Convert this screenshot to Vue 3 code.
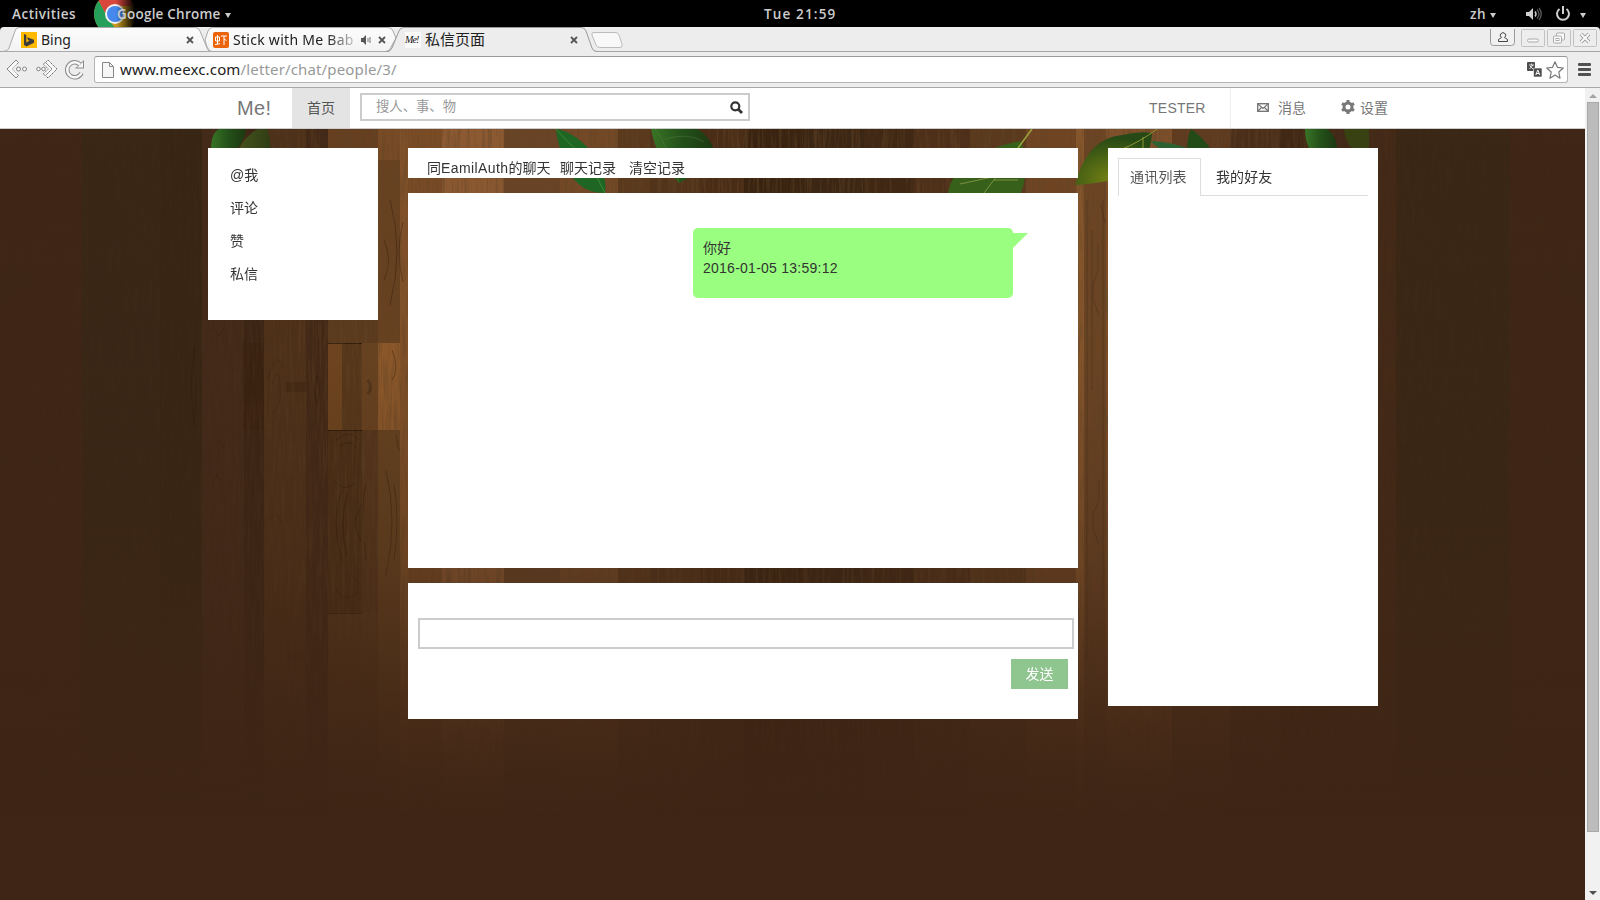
<script setup>
const sideLinks = ['@我', '评论', '赞', '私信']

// Floor planks: [left, width, colour]
const planks = [
  [0, 82, '#3f2616'], [82, 78, '#3a2716'], [160, 42, '#382614'], [202, 42, '#432a19'],
  [244, 20, '#3c2515'], [264, 42, '#4e311a'], [306, 22, '#432917'], [328, 52, '#5c3b1e'],
  [378, 22, '#6b4523'], [400, 8, '#82522a'], [408, 34, '#7a4c26'], [442, 62, '#8b5932'],
  [504, 56, '#6a4426'], [560, 58, '#734927'], [618, 32, '#5b391c'], [650, 50, '#52341b'],
  [700, 44, '#4a2d17'], [744, 60, '#3a2411'], [804, 60, '#3c2614'], [864, 50, '#402815'],
  [914, 56, '#4e301a'], [970, 56, '#5a391d'], [1026, 50, '#704524'], [1076, 8, '#85562c'],
  [1084, 22, '#6c4525'], [1106, 66, '#7e502b'], [1172, 58, '#5f3b20'], [1230, 50, '#4a2e1a'],
  [1280, 50, '#412815'], [1330, 66, '#432917'], [1396, 114, '#3a2715'], [1510, 80, '#3f2616']
]

// Short boards laid across the long ones: [x, y, w, h, colour, opacity]
const boards = [
  [328, 129, 50, 31, '#6b4321', 0.6], [378, 129, 22, 31, '#7a4c27', 0.8], [378, 160, 22, 183, '#654120', 0.6],
  [328, 343, 14, 87, '#75491f', 0.8], [342, 343, 19, 87, '#573719', 0.9], [362, 343, 16, 87, '#6a4521', 0.9],
  [378, 343, 22, 87, '#8f5b2c', 0.95], [328, 430, 34, 183, '#472d15', 0.8], [362, 430, 16, 183, '#55361b', 0.8],
  [378, 430, 22, 183, '#67421f', 0.8], [328, 613, 34, 87, '#5a3a1d', 0.8], [378, 613, 22, 87, '#674320', 0.8],
  [243, 343, 21, 87, '#38210f', 0.6], [286, 382, 20, 10, '#3b2310', 0.5], [286, 652, 20, 10, '#3b2310', 0.3],
  [328, 343, 34, 1, '#201006', 0.7], [328, 430, 34, 1, '#201006', 0.7], [328, 613, 34, 1, '#201006', 0.6]
]
</script>

<template>
  <div class="screen">
    <header class="topbar">
      <span class="activities">Activities</span>
      <svg class="chrome-logo" width="44" height="27" viewBox="0 0 44 27">
        <defs>
          <linearGradient id="lf" x1="0" x2="1"><stop offset=".5" stop-color="#000" stop-opacity="0" /><stop offset=".93" stop-color="#000" /></linearGradient>
          <clipPath id="lc"><circle cx="21" cy="14" r="21" /></clipPath>
        </defs>
        <g clip-path="url(#lc)">
          <path d="M0 0H44V27H0z" fill="#c99a1c" />
          <path d="M0 -8H44V6H21L14 18L4 0z" fill="#d8463c" />
          <path d="M3 -2L15 20L21 28H0V-2z" fill="#25a05a" />
        </g>
        <circle cx="21" cy="14" r="10" fill="#f1f1f1" /><circle cx="21" cy="14" r="8" fill="#4688ed" />
        <rect width="44" height="27" fill="url(#lf)" />
      </svg>
      <span class="appname">Google Chrome</span><i class="caret"></i>
      <span class="clock">Tue 21:59</span>
      <span class="lang">zh</span><i class="caret c2"></i>
      <svg class="vol" width="16" height="14" viewBox="0 0 16 14"><path d="M0 5h3l4-4v12L3 9H0z" fill="#d0d0d0" /><path d="M9 4.5q2 2.5 0 5" stroke="#ccc" stroke-width="1.5" fill="none" /><path d="M11 2.5q4 4.500 0 9M13 1q4.500 6 0 12" stroke="#555" stroke-width="1.400" fill="none" /></svg>
      <svg class="power" width="16" height="16" viewBox="0 0 16 16"><path d="M4.500 3A6 6 0 1 0 11.500 3" fill="none" stroke="#d0d0d0" stroke-width="2" /><path d="M8 0v8" stroke="#d0d0d0" stroke-width="2" /></svg>
      <i class="caret c3"></i>
    </header>

    <div class="tabstrip">
      <svg class="strip-art" width="1600" height="26" viewBox="0 0 1600 26">
        <defs><linearGradient id="tg" x2="0" y2="1"><stop stop-color="#fcfcfc" /><stop offset="1" stop-color="#f3f3f3" /></linearGradient></defs>
        <path d="M0 0H1600V26H0z" fill="#ededed" />
        <path d="M0 0H4Q0 0 0 4zM1600 0H1596Q1600 0 1600 4z" fill="#000" />
        <path d="M0 24.500H1600" stroke="#a5a5a5" />
        <g fill="url(#tg)" stroke="#a9a9a9">
          <path d="M3 24.500Q8 24.500 9 21L15 4Q16 .5 19 .5H195Q199 .5 200 4L207 21Q208 24.500 211 24.500z" />
          <path d="M207 20L205 13L208 4Q209 .5 213 .5H388Q392 .5 393 4L396 11L390 22Q389 24.500 386 24.500H212Q209 24.500 207 20z" />
        </g>
        <path d="M386 25.500Q391 24.500 392 21L399 4Q400 .5 404 .5H581Q585 .5 586 4L592 21Q593 24.500 597 24.500L597 26H386z" fill="#ededed" />
        <path d="M386 24.500Q391 24.500 392 21L399 4Q400 .5 404 .5H581Q585 .5 586 4L592 21Q593 24.500 597 24.500" fill="none" stroke="#999" />
        <path d="M594 5.500H615Q618 5.500 619 8L622 17Q623 20.500 620 20.500H600Q597 20.500 596 18L592 8Q591 5.500 594 5.500z" fill="#f8f8f8" stroke="#bcbcbc" />
      </svg>
      <div class="tab t1">
        <svg width="16" height="16" viewBox="0 0 16 16"><path d="M0 0h16v16H0z" fill="#ffb900" /><path d="M3 2l2.300.9V10.500l3.200-1.900-1.500-.7L6 5.300L13 7.700v3L5.500 14.500 3 13z" fill="#3c3c3c" /></svg>
        <span class="tabname">Bing</span>
        <svg class="x" width="8" height="8" viewBox="0 0 8 8"><path d="M1 1l6 6M7 1l-6 6" stroke="#555" stroke-width="1.800" /></svg>
      </div>
      <div class="tab t2">
        <svg width="16" height="16" viewBox="0 0 16 16"><rect width="16" height="16" rx="2" fill="#ec6408" /><path d="M2.500 5h4v4h-4zM4.500 3v9M2 12.500l5-.8M8 4h6M11 4v9M11 7l2.500 1.500" stroke="#fff" fill="none" /></svg>
        <span class="tabname fade">Stick with Me Bab</span>
        <svg class="snd" width="10" height="10" viewBox="0 0 10 10"><path d="M0 3h2l3-3v10L2 7H0z" fill="#555" /><path d="M7 3v4M9 2v6" stroke="#777" /></svg>
        <svg class="x" width="8" height="8" viewBox="0 0 8 8"><path d="M1 1l6 6M7 1l-6 6" stroke="#555" stroke-width="1.800" /></svg>
      </div>
      <div class="tab t3">
        <span class="fav">Me!</span>
        <span class="tabname">私信页面</span>
        <svg class="x" width="8" height="8" viewBox="0 0 8 8"><path d="M1 1l6 6M7 1l-6 6" stroke="#555" stroke-width="1.800" /></svg>
      </div>
      <svg class="wins" width="110" height="22" viewBox="0 0 110 22" fill="none">
        <path d="M2.500 2V15.500Q2.500 18.500 5.500 18.500H23.500Q26.500 18.500 26.500 15.500V2" stroke="#999" fill="#f1f1f1" />
        <path d="M10.500 14.500V12.500L13.500 10.500Q11.500 9 12.500 7Q15 4 17.500 7Q18.500 9 16.500 10.500L19.500 12.500V14.500z" stroke="#444" />
        <g stroke="#c2c2c2"><rect x="33.500" y="2.500" width="23" height="17" rx="1" /><rect x="59.500" y="2.500" width="23" height="17" rx="1" /><rect x="85.500" y="2.500" width="23" height="17" rx="1" /></g>
        <g stroke="#aaa" fill="#fafafa"><rect x="39.500" y="12" width="11" height="3" rx="1.500" /><rect x="68.500" y="6" width="8" height="7" rx="1" /><rect x="65.500" y="9" width="8" height="7" rx="1" /><rect x="68" y="11.500" width="3" height="2" /></g>
        <path d="M93 7l8 8M101 7l-8 8" stroke="#999" stroke-width="3.800" /><path d="M93 7l8 8M101 7l-8 8" stroke="#fafafa" stroke-width="1.800" />
      </svg>
    </div>

    <div class="toolbar">
      <svg class="navicons" width="94" height="34" viewBox="0 0 94 34" fill="none">
        <g stroke="#858585" fill="#f8f8f8">
          <path d="M7 16L16 7L18.500 9.500L12 16L18.500 22.500L16 25z" />
          <circle cx="18.500" cy="16" r="2" /><circle cx="24.500" cy="16" r="2" />
          <path d="M12 16L17 11M12 16l5 5" stroke="#c0c0c0" />
          <g stroke-dasharray="1.500 .8"><path d="M57 16L48 7L45.500 9.500L52 16L45.500 22.500L48 25z" stroke="#666" /><path d="M52 16L45.500 9.500L43 11L48.500 16L43 21L45.500 22.500z" stroke="#777" /></g>
          <circle cx="38.500" cy="16" r="1.800" /><circle cx="43.500" cy="16" r="1.800" />
        </g>
        <path d="M80 11.500A7.500 7.500 0 1 0 81.500 20" stroke="#8b8b8b" stroke-width="4.500" /><path d="M84 7v8.500h-9z" fill="#8b8b8b" />
        <path d="M80 11.500A7.500 7.500 0 1 0 81.500 20" stroke="#f7f7f7" stroke-width="2.500" /><path d="M83 9v5.500h-6z" fill="#f7f7f7" />
      </svg>
      <div class="omnibox">
        <svg class="page" width="12" height="16" viewBox="0 0 12 16"><path d="M.5.5H7.500L11.500 4.500V15.500H.5z" fill="#f6f6f6" stroke="#888" /><path d="M7.500.5v4h4" fill="none" stroke="#888" /></svg>
        <span class="url"><b>www.meexc.com</b>/letter/chat/people/3/</span>
        <svg class="translate" width="15" height="15" viewBox="0 0 15 15"><rect width="8" height="9" rx="1" fill="#4d4d4d" /><rect x="6.500" y="6" width="8.500" height="9" rx="1" fill="#4d4d4d" stroke="#fff" stroke-width=".6" /><path d="M2 3h5M4.500 1.500V3M2.500 7l3.500-4M3 4l3 3" stroke="#fff" stroke-width=".8" /><path d="M8.800 13l2-5 2 5M9.500 11.500h2.600" stroke="#fff" fill="none" /></svg>
        <svg class="star" width="18" height="18" viewBox="0 0 18 18"><path d="M9 .8L11.400 6.300L17.300 7L12.800 11L14 17.200L9 14L4 17.200L5.200 11L.7 7L6.600 6.300z" fill="#fff" stroke="#777" stroke-width="1.200" stroke-linejoin="round" /></svg>
      </div>
      <div class="menu"><i></i><i></i><i></i></div>
    </div>

    <div class="viewport">
      <div class="page-area">
        <svg class="wood" width="1585" height="771" viewBox="0 129 1585 771">
          <defs>
            <linearGradient id="fade" x2="0" y2="1"><stop stop-color="#402714" stop-opacity="0" /><stop offset=".3" stop-color="#3e2515" stop-opacity=".03" /><stop offset=".55" stop-color="#3e2515" stop-opacity=".32" /><stop offset=".7" stop-color="#3e2515" stop-opacity=".68" /><stop offset=".77" stop-color="#3e2515" stop-opacity=".84" /><stop offset=".83" stop-color="#3e2515" stop-opacity=".94" /><stop offset=".9" stop-color="#3e2515" /></linearGradient>
            <linearGradient id="gm"><stop stop-color="#000" /><stop offset=".12" stop-color="#202020" /><stop offset=".23" stop-color="#fff" /><stop offset=".78" stop-color="#fff" /><stop offset=".88" stop-color="#202020" /><stop offset="1" stop-color="#000" /></linearGradient>
            <mask id="grainmask"><rect y="129" width="1585" height="771" fill="url(#gm)" /></mask>
            <filter id="grain" x="0" y="0" width="100%" height="100%"><feTurbulence type="fractalNoise" baseFrequency=".4 .025" numOctaves="3" seed="8" /><feColorMatrix values="0 0 0 0 .12  0 0 0 0 .06  0 0 0 0 .02  2.600 0 0 0 -1.150" /></filter>
            <radialGradient id="lime" cx=".5" cy=".9" r=".8"><stop stop-color="#788313" /><stop offset="1" stop-color="#264915" /></radialGradient>
            <linearGradient id="leaf"><stop stop-color="#397426" /><stop offset=".5" stop-color="#235019" /><stop offset="1" stop-color="#1d3711" /></linearGradient>
            <linearGradient id="dusk"><stop stop-color="#47601f" stop-opacity=".7" /><stop offset="1" stop-color="#2e3d14" /></linearGradient>
          </defs>
          <rect y="129" width="1585" height="771" fill="#3e2515" />
          <rect v-for="p in planks" :key="p[0]" :x="p[0]" y="129" :width="p[1]" height="771" :fill="p[2]" />
          <rect v-for="(b, i) in boards" :key="'b' + i" :x="b[0]" :y="b[1]" :width="b[2]" :height="b[3]" :fill="b[4]" :opacity="b[5]" />
          <g fill="none" stroke="#241306" stroke-width="1" opacity=".38">
            <path d="M336 440q15-12 22 0M340 446q10-8 16 2M336 590q10 14 22 2M333 480q10 14 24 2M342 490q-12 30 0 72M347 494q-8 30 0 62M361 505l-7 18 7 18M351 575l8 8M366 485q-6 20 0 75" />
            <path d="M368 380q5 7 0 14" stroke-width="3" /><path d="M317 375q-4 16 0 30q4-14 0-30M394 485q6 35 0 75M386 470q12 50 0 105M392 350q8 20 0 30M396 435l3 16M403 222q-8 30 0 60M390 200q14 50 0 105M384 240q9 20 0 40" />
            <path d="M194 348q-5 35 0 78q4-40 0-78M268 380q8-35 16-10M272 385q6-22 8 0t-8 28M214 450l5-10l5 10M214 328l5 8l5-8M212 486l5-12 5 12M268 520q8-12 14 3" opacity=".5" />
            <path d="M1098 245v25l-5 14v16l6 14M1101 205l4 18M1099 480v20l-6 14v14l6 18M1092 230v160M1087 200v460M1103 200v400" opacity=".65" />
          </g>
          <g mask="url(#grainmask)"><rect y="129" width="1585" height="771" filter="url(#grain)" opacity=".55" /></g>
          <rect y="129" width="1585" height="771" fill="url(#fade)" />
          <path d="M211 150Q211 133 219 129H246Q245 141 236 150z" fill="url(#leaf)" /><path d="M238 150Q247 134 258 129H267Q271 138 270 150z" fill="url(#dusk)" />
          <path d="M556 129Q576 132 595 156Q608 178 605 193Q573 193 564 158Q557 143 556 129z" fill="#1f6524" /><path d="M556 129Q573 148 588 160L605 193" fill="none" stroke="#3b8a34" />
          <path d="M651 129H698Q710 137 714 150Q700 173 679 183Q657 160 651 129z" fill="url(#leaf)" /><path d="M655 129Q668 145 679 183M665 139Q688 132 704 142" fill="none" stroke="#5c8140" opacity=".4" />
          <path d="M948 193Q955 154 1021 141Q1030 168 1021 193z" fill="#37611b" /><path d="M1032 129L1018 148" fill="none" stroke="#9aa63c" stroke-width="1.500" /><path d="M1018 148L984 193M997 176L960 184M1005 166L974 164M994 180L1018 180" fill="none" stroke="#7c9040" />
          <path d="M1075 185Q1087 138 1122 135Q1139 131 1152 133Q1151 160 1130 174Q1109 183 1075 185z" fill="url(#lime)" /><path d="M1120 150Q1140 142 1157 129M1143 137v11" stroke="#8b9634" fill="none" />
          <path d="M1151 141Q1173 142 1193 150H1164Q1155 147 1151 141z" fill="#2c6132" /><path d="M1191 129Q1205 139 1211 150H1187Q1187 138 1191 129z" fill="#234b18" />
          <path d="M1305 129H1328Q1338 139 1337 150H1310Q1305 141 1305 129z" fill="url(#leaf)" /><path d="M1344 129H1369V150H1353Q1344 139 1344 129z" fill="#354711" opacity=".8" />
        </svg>

        <nav class="sitenav">
          <a class="brand">Me!</a>
          <a class="home">首页</a>
          <div class="search">
            <span>搜人、事、物</span>
            <svg width="13" height="13" viewBox="0 0 13 13"><circle cx="5.300" cy="5.300" r="4" fill="none" stroke="#333" stroke-width="2.200" /><path d="M8 8l4 4" stroke="#333" stroke-width="2.800" /></svg>
          </div>
          <a class="user">TESTER</a>
          <div class="msgs">
            <svg width="12" height="9" viewBox="0 0 12 9"><rect x=".7" y=".7" width="10.600" height="7.600" fill="none" stroke="#777" stroke-width="1.400" /><path d="M1 1l5 4.500L11 1M1 8l3.500-3.500M11 8L7.500 4.500" fill="none" stroke="#777" stroke-width="1.200" /></svg>
            <a>消息</a>
          </div>
          <div class="settings">
            <svg width="14" height="14" viewBox="-7 -7 14 14"><circle r="4" fill="none" stroke="#777" stroke-width="3" /><g stroke="#777" stroke-width="3"><path d="M0-4.500V-7M0 4.500V7M3.900-2.250L6-3.500M3.900 2.250L6 3.500M-3.900-2.250L-6-3.500M-3.900 2.250L-6 3.500" /></g></svg>
            <a>设置</a>
          </div>
        </nav>

        <main class="columns">
          <aside class="side"><a v-for="l in sideLinks" :key="l">{{ l }}</a></aside>
          <section class="center">
            <div class="chat-head"><span class="peer">同<em>EamilAuth</em>的聊天</span><a class="history">聊天记录</a><a>清空记录</a></div>
            <div class="chat">
              <div class="bubble"><p>你好</p><p class="time">2016-01-05 13:59:12</p></div>
            </div>
            <div class="compose"><div class="field"></div><button>发送</button></div>
          </section>
          <aside class="contacts">
            <div class="ctabs"><a class="on">通讯列表</a><a class="off">我的好友</a></div>
          </aside>
        </main>
      </div>
      <div class="scroll">
        <svg width="15" height="14" viewBox="0 0 15 14"><path d="M4 10l4-4 4 4z" fill="#a3a3a3" /></svg>
        <div class="thumb"></div>
        <svg width="15" height="14" viewBox="0 0 15 14"><path d="M4 5l4 4 4-4z" fill="#505050" /></svg>
      </div>
    </div>
  </div>
</template>

<style>
html, body { margin: 0; overflow: hidden; }
</style>

<style scoped>
* { box-sizing: border-box; }
p { margin: 0; }
svg { display: block; flex: none; }
.screen { width: 1600px; height: 900px; overflow: hidden; display: flex; flex-direction: column; background: #000; font: 14px/20px "Liberation Sans", "Noto Sans CJK SC", sans-serif; color: #333; }
.topbar { height: 27px; flex: none; display: flex; align-items: center; color: #ccc; font: 600 13.500px/28px "Open Sans", "Noto Sans", sans-serif; letter-spacing: .5px; padding-left: 12px; white-space: nowrap; }
.activities { width: 82px; }
.chrome-logo { margin-right: -21px; }
.appname { position: relative; width: 105px; letter-spacing: .22px; }
.caret { width: 0; height: 0; border: 3.500px solid transparent; border-top: 5px solid #ccc; border-bottom: 0; margin: 4px 0 0 3px; flex: none; }
.clock { margin-left: 533px; width: 73px; letter-spacing: 1.150px; }
.lang { margin-left: 633px; width: 19px; }
.caret.c2 { margin-left: 1px; }
.vol { margin-left: 30px; }
.power { margin-left: 13px; }
.caret.c3 { margin-left: 9px; }
.tabstrip { position: relative; height: 26px; flex: none; display: flex; align-items: flex-start; background: #ededed; }
.strip-art { position: absolute; left: 0; top: 0; }
.tab { position: relative; height: 25px; display: flex; align-items: center; font: 14px/25px "Noto Sans", "Noto Sans CJK SC", sans-serif; color: #222; white-space: nowrap; }
.t1 { width: 173px; margin-left: 21px; }
.t2 { width: 173px; margin-left: 19px; letter-spacing: .28px; }
.t3 { width: 173px; margin-left: 19px; font-size: 15px; }
.tab .tabname { margin-left: 4px; }
.tab .x { margin-left: auto; }
.fade { width: 120px; overflow: hidden; -webkit-mask-image: linear-gradient(90deg, #000 78%, rgba(0, 0, 0, .25)); mask-image: linear-gradient(90deg, #000 78%, rgba(0, 0, 0, .25)); }
.snd { margin-left: 8px; }
.fav { width: 16px; height: 16px; background: #fafafa; font: italic 10px/16px "Liberation Serif", serif; letter-spacing: -.9px; color: #111; }
.wins { position: relative; margin-left: auto; margin-right: 2px; }
.toolbar { height: 35px; flex: none; background: #ededed; border-bottom: 1px solid #a8a8a8; display: flex; align-items: flex-start; }
.omnibox { margin-top: 3px; width: 1474px; height: 27px; border: 1px solid #b5b5b5; border-top-color: #999; border-radius: 3px; background: #fff; display: flex; align-items: center; padding-left: 7px; }
.url { margin-left: 6px; width: 1407px; font: 15px/25px "Noto Sans", sans-serif; letter-spacing: .15px; color: #999; white-space: nowrap; }
.url b { font-weight: 400; color: #222; }
.star { margin-left: 4px; }
.menu { margin: 10px 0 0 10px; display: flex; flex-direction: column; gap: 2px; }
.menu i { width: 13px; height: 3px; border-radius: 1px; background: #505050; }
.viewport { flex: 1; display: flex; min-height: 0; }
.page-area { position: relative; width: 1585px; overflow: hidden; }
.wood { position: absolute; left: 0; top: 41px; }
.sitenav { position: relative; height: 41px; background: #fff; border-bottom: 1px solid #ccc; display: flex; padding-left: 237px; line-height: 40px; color: #777; white-space: nowrap; }
.brand { width: 55px; font-size: 20px; line-height: 41px; letter-spacing: .4px; }
.home { width: 58px; background: #e4e4e4; color: #555; text-align: center; }
.search { margin: 5px 0 0 10px; width: 390px; height: 28px; border: 2px solid #ccc; display: flex; justify-content: space-between; padding: 0 5px 0 14px; font-size: 13.333px; line-height: 23px; color: #999; }
.search svg { margin-top: 6px; }
.user { margin-left: 399px; width: 82px; border-right: 1px solid #eee; letter-spacing: .25px; }
.msgs { display: flex; margin-left: 26px; }
.msgs svg { margin: 15px 9px 0 0; }
.settings { display: flex; margin-left: 35px; }
.settings svg { margin: 12px 5px 0 0; }
.columns { position: relative; display: flex; align-items: flex-start; padding: 19px 0 0 208px; }
.side { width: 170px; height: 172px; background: #fff; padding: 11px 0 0 22px; display: flex; flex-direction: column; line-height: 33px; }
.center { width: 670px; margin-left: 30px; display: flex; flex-direction: column; gap: 15px; }
.chat-head { height: 30px; background: #fff; padding: 10px 0 0 19px; display: flex; white-space: nowrap; }
.peer { width: 133px; }
.peer em { font-style: normal; letter-spacing: .4px; }
.history { width: 69px; }
.chat { height: 375px; background: #fff; padding: 35px 65px 0 0; }
.bubble { position: relative; width: 320px; height: 70px; margin-left: auto; background: #9aff80; border-radius: 5px; padding: 10px; }
.bubble::after { content: ""; position: absolute; left: 320px; top: 5px; border-top: 15px solid #9aff80; border-right: 15px solid transparent; }
.time { letter-spacing: .25px; }
.compose { height: 136px; background: #fff; padding: 35px 4px 0 10px; display: flex; flex-direction: column; }
.field { height: 31px; border: 2px solid #ccc; }
.compose button { margin: 10px 6px 0 auto; width: 57px; height: 30px; border: 0; padding: 0; background: #8fc58f; color: #fff; font: inherit; }
.contacts { width: 270px; height: 558px; margin-left: 30px; background: #fff; padding: 10px; }
.ctabs { display: flex; height: 38px; border-bottom: 1px solid #ddd; line-height: 36px; }
.on { width: 83px; height: 38px; border: 1px solid #ddd; border-bottom: 0; background: #fff; color: #555; padding-left: 11px; letter-spacing: .2px; }
.off { padding: 1px 0 0 15px; letter-spacing: .1px; }
.scroll { width: 15px; background: #f1f1f1; display: flex; flex-direction: column; justify-content: space-between; }
.thumb { width: 12px; height: 730px; margin: 0 0 auto 2px; background: #bcbcbc; border: 1px solid #a8a8a8; }
</style>
